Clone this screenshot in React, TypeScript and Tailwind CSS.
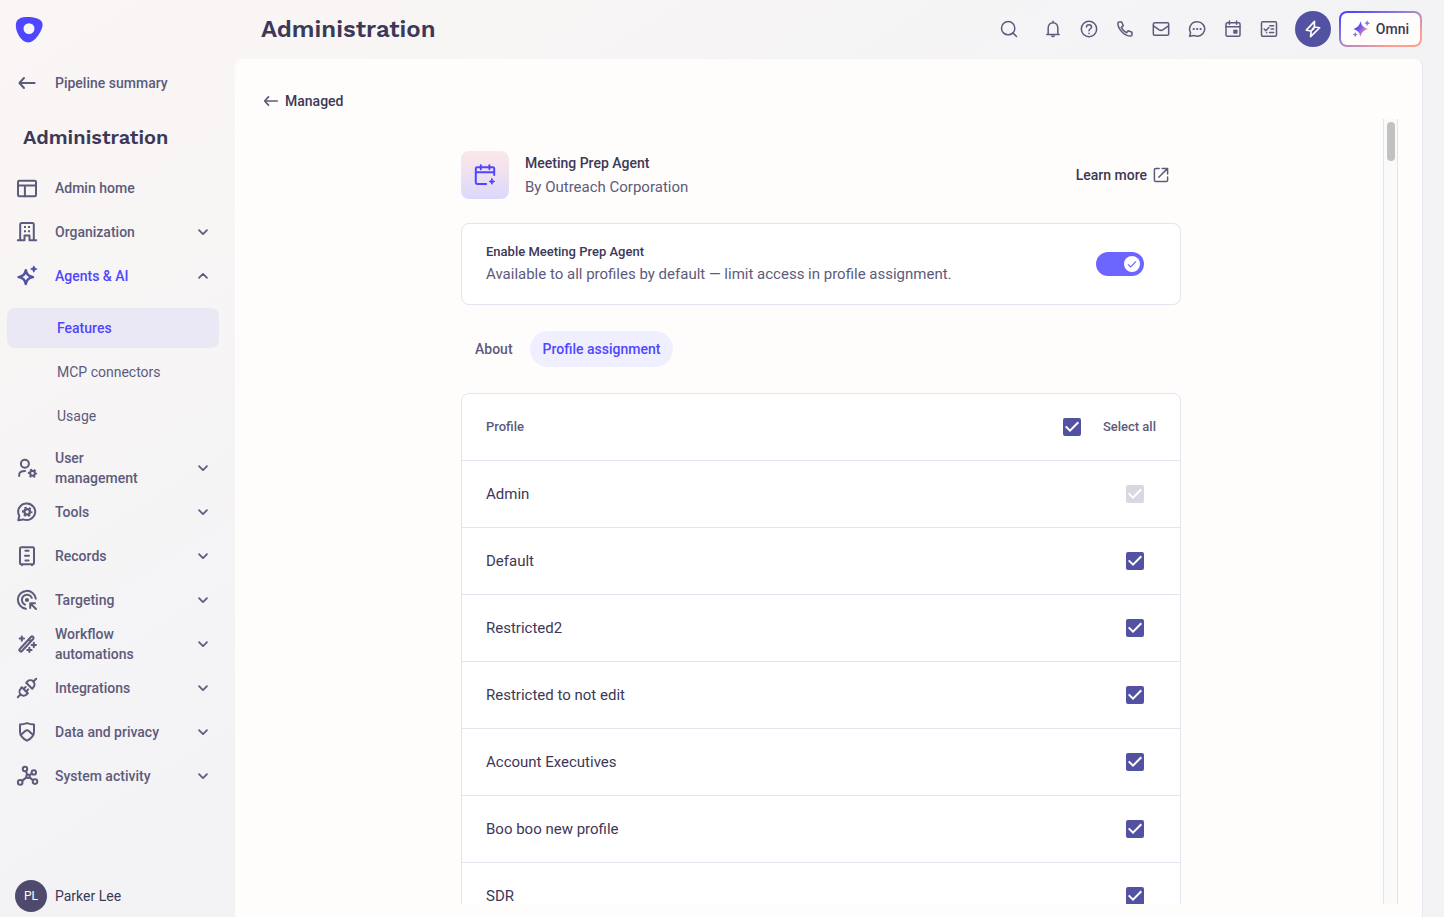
import React, { useState } from 'react';
import { Search } from 'lucide-react';

type IconName =
  | 'home' | 'building' | 'sparkle' | 'userGear' | 'tools' | 'records' | 'target' | 'wand' | 'plug' | 'shield' | 'nodes'
  | 'bell' | 'help' | 'phone' | 'mail' | 'chat' | 'calendar' | 'tasks' | 'bolt' | 'arrowLeft' | 'external' | 'calendarPlus'
  | 'chevronDown' | 'chevronUp';

interface GearProps {
  cx: number;
  cy: number;
  r: number;
}

// Ring with six teeth, the teeth are the dashes of a second circle
const Gear: React.FC<GearProps> = ({ cx, cy, r }) => {
  const tooth = (2 * Math.PI * r) / 12;
  return (
    <>
      <circle cx={cx} cy={cy} r={r * 0.64} strokeWidth={r * 0.54} />
      <circle cx={cx} cy={cy} r={r} strokeWidth={r * 0.46} strokeDasharray={`${tooth} ${tooth}`} strokeDashoffset={tooth / 2} strokeLinecap="butt" />
    </>
  );
};

const ICONS: Record<IconName, React.ReactNode> = {
  home: <><rect x="3" y="4.8" width="18" height="15.4" rx="1.2" /><path d="M3 9.6h18M9.9 9.6v10.6" /></>,
  building: (
    <>
      <path d="M2.8 20.2h6.7v-4.6h5v4.6h6.7M5.2 20V4.6c0-.9.6-1.5 1.5-1.5h10.6c.9 0 1.5.6 1.5 1.5V20" />
      <path d="M9 7h2M13 7h2M9 11.2h2M13 11.2h2" strokeLinecap="butt" />
    </>
  ),
  sparkle: (
    <>
      <path d="M10.8 6.2c.9 4.2 2.4 5.8 7.2 6.9-4.8 1.1-6.3 2.7-7.2 6.9-.9-4.2-2.4-5.8-7.2-6.9 4.8-1.1 6.3-2.7 7.2-6.9z" strokeWidth="2.5" />
      <path d="M18.8 2.2l.9 2 2 .8-2 .8-.9 2-.9-2-2-.8 2-.8z" fill="currentColor" strokeWidth="1.2" />
    </>
  ),
  userGear: (
    <>
      <circle cx="9.9" cy="7.7" r="4" />
      <path d="M4.2 20v-1.3c0-2.2 2-3.7 5.8-3.7" />
      <Gear cx={17.5} cy={17.3} r={3.8} />
    </>
  ),
  tools: (
    <>
      <path d="M12.2 3.6a8.7 8.2 0 1 1-3.9 15.8l-5 .8 1-4.4A8.4 8.2 0 0 1 12.2 3.6z" />
      <Gear cx={12.2} cy={11.8} r={4.3} />
    </>
  ),
  records: <><rect x="5" y="3.2" width="14" height="17" rx="1.2" /><path d="M10.4 6.8h3.2M10 11.7h4M10.4 16.6h3.2M7 20.8v.4M17 20.8v.4" /></>,
  target: (
    <>
      <path d="M20.8 10.6a9 9 0 1 0-10 10.2" />
      <path d="M16.8 9.8a5.2 5.2 0 1 0-6.8 6.9" />
      <circle cx="12" cy="12" r="1.1" fill="currentColor" />
      <path d="M15.2 20v-4.8H20M15.6 15.6l5.4 5.4" />
    </>
  ),
  wand: (
    <>
      <path d="M4.6 17.2L16.2 4.7c.5-.5 1.2-.5 1.700 0l.4.4c.4.5.4 1.1 0 1.600L6.700 19.200c-.4.4-1 .4-1.500 0l-.6-.6c-.4-.4-.4-1 0-1.400zM13.800 7.400l2 1.900" />
      <path d="M6.800 4.400v4.400M4.600 6.600H9M18.800 10.800v4.400M16.600 13H21M14.400 15.700v4.400M12.200 17.900h4.400" />
    </>
  ),
  plug: (
    <>
      <path d="M2.800 21.200l2.800-2.800M21.200 2.800l-2.800 2.800M6.800 11.200l6 6-1.300 1.300c-1.600 1.600-4.200 1.600-5.800 0s-1.600-4.200 0-5.800zM17.200 12.800l-6-6 1.300-1.300c1.600-1.600 4.200-1.600 5.800 0s1.600 4.200 0 5.800z" />
      <path d="M9 12.600l1.600-1.600M11.600 15l1.600-1.600" />
    </>
  ),
  shield: <><path d="M12 3.100c2.400.9 4.800 1.300 7 1.300v7.100c0 4.200-2.900 7.200-7 9.200-4.100-2-7-5-7-9.200V4.400c2.200 0 4.600-.4 7-1.300z" /><path d="M5.800 15l4.400-4c1.100-.9 2.500-.9 3.600 0l4.400 4" /></>,
  nodes: (
    <>
      <circle cx="10" cy="5" r="2.200" /><circle cx="18.800" cy="8.400" r="2.200" /><circle cx="13" cy="12.200" r="1.700" />
      <circle cx="5.200" cy="18.400" r="2.300" /><circle cx="20" cy="17.600" r="2.300" />
      <path d="M10.900 7.300l1.300 3M14.600 11.200l2.300-1.500M11.400 13.400l-4.300 3.500M14.500 13.400l3.600 2.800" />
    </>
  ),
  bell: <><path d="M4.600 18.600h14.800M6.200 18.400V11c0-3.700 2.200-6.600 5.800-6.600s5.800 2.900 5.800 6.600v7.400M12 2.600v1.600" /><path d="M10 20.600c.4 1.300 3.600 1.300 4 0z" fill="currentColor" strokeWidth="1" /></>,
  help: <><circle cx="12" cy="12" r="9.200" /><path d="M8.900 9.600c.1-1.700 1.400-2.800 3.100-2.800s3.100 1.100 3.100 2.700c0 2.200-3.100 2.300-3.100 4.700M12 17v.4" /></>,
  phone: <path d="M5 3.600h3.100l1.800 4.600-2.400 1.900a14 14 0 0 0 6.400 6.400l1.900-2.400 4.600 1.800V19a1.500 1.500 0 0 1-1.500 1.500C11.500 20.500 3.500 12.500 3.500 5.100c0-.9.7-1.500 1.500-1.500z" />,
  mail: <><rect x="2.800" y="4.600" width="18.400" height="15" rx="1.500" /><path d="M3 8.300l6.800 4.700c1.500.9 2.900.9 4.400 0L21 8.300" /></>,
  chat: <><path d="M12.200 3.400a9 8.600 0 1 1-4 16.300l-5 1 1.100-4.400A8.700 8.600 0 0 1 12.200 3.400z" /><path d="M8 12h.2M12.100 12h.2M16.200 12h.2" strokeWidth="2.600" /></>,
  calendar: <><rect x="3.600" y="4.600" width="16.800" height="16" rx="1.500" /><path d="M3.600 9.200h16.800M7.700 2.400v4M16.300 2.400v4" /><path d="M13 13.200h4v4h-4z" fill="currentColor" strokeWidth=".8" /></>,
  tasks: <><rect x="3" y="3.400" width="18" height="17.400" rx="1.500" /><path d="M6.200 12l2 2 3.600-3.800M13 8.200h4.600M14.600 12h3M12.600 16.200h5M9 16.600h.2" /></>,
  bolt: <path d="M13.800 2.800L4 13.300l5.800.9-.7 7L20 10.500l-6.400-.9zM9.800 14.200l3.200-2.600M13.600 9.600l-2.600 2.800" />,
  arrowLeft: <path d="M19.600 12H4.600M9 7l-4.600 5L9 17" />,
  external: <path d="M9.500 3.200H5A1.800 1.800 0 0 0 3.200 5v14A1.800 1.800 0 0 0 5 20.800h14a1.800 1.800 0 0 0 1.800-1.800v-4.500M13.500 3.200h7.300v7.300M20.500 3.500L9 15" />,
  calendarPlus: (
    <>
      <path d="M21.200 12V5.600a1.400 1.400 0 0 0-1.400-1.400H4.200a1.400 1.400 0 0 0-1.400 1.400v14a1.400 1.400 0 0 0 1.400 1.400h9M2.800 9.200h18.400M7.800 2.200v4M16.400 2.200v4" />
      <path d="M18.900 15.700l.8 2 2 .8-2 .8-.8 2-.8-2-2-.8 2-.8z" fill="currentColor" strokeWidth="1" />
    </>
  ),
  chevronDown: <path d="M6 9.200l6 6 6-6" />,
  chevronUp: <path d="M6 14.800l6-6 6 6" />,
};

interface IconProps {
  name: IconName;
  className?: string;
  weight?: number;
}

const Icon: React.FC<IconProps> = ({ name, className = 'size-6', weight = 1.8 }) => (
  <svg
    viewBox="0 0 24 24"
    className={`shrink-0 ${className}`}
    fill="none"
    stroke="currentColor"
    strokeWidth={weight}
    strokeLinecap="round"
    strokeLinejoin="round"
    aria-hidden="true"
  >
    {ICONS[name]}
  </svg>
);

interface NavItem {
  label: string;
  icon: IconName;
  expandable?: boolean;
  children?: string[];
}

const navItems: NavItem[] = [
  { label: 'Admin home', icon: 'home' },
  { label: 'Organization', icon: 'building', expandable: true },
  { label: 'Agents & AI', icon: 'sparkle', expandable: true, children: ['Features', 'MCP connectors', 'Usage'] },
  { label: 'User management', icon: 'userGear', expandable: true },
  { label: 'Tools', icon: 'tools', expandable: true },
  { label: 'Records', icon: 'records', expandable: true },
  { label: 'Targeting', icon: 'target', expandable: true },
  { label: 'Workflow automations', icon: 'wand', expandable: true },
  { label: 'Integrations', icon: 'plug', expandable: true },
  { label: 'Data and privacy', icon: 'shield', expandable: true },
  { label: 'System activity', icon: 'nodes', expandable: true },
];

const headerIcons: { name: IconName; label: string }[] = [
  { name: 'bell', label: 'Notifications' },
  { name: 'help', label: 'Help' },
  { name: 'phone', label: 'Calls' },
  { name: 'mail', label: 'Mail' },
  { name: 'chat', label: 'Messages' },
  { name: 'calendar', label: 'Calendar' },
  { name: 'tasks', label: 'Tasks' },
];

const profiles = ['Admin', 'Default', 'Restricted2', 'Restricted to not edit', 'Account Executives', 'Boo boo new profile', 'SDR'];

const Sidebar: React.FC = () => {
  const [open, setOpen] = useState('Agents & AI');

  return (
    <aside className="flex w-[235px] shrink-0 flex-col overflow-hidden">
      <a href="#" aria-label="Outreach" className="mt-4 ml-[15px] block size-7">
        <svg viewBox="0 0 28 28" className="size-7" aria-hidden="true">
          <path
            fillRule="evenodd"
            fill="#4f46ff"
            d="M13 1C6 1 .8 2.5.8 9.5.8 16 6 26.5 13.5 26.5 20 26.5 27.6 14.5 27.6 8.5 27.6 3 20 1 13 1zM14 7.2a5.5 5.4 0 1 1 0 10.8 5.5 5.4 0 0 1 0-10.8z"
          />
        </svg>
      </a>
      <a href="#" className="mt-[17px] flex h-11 items-center gap-4 pl-[15px] text-sm font-medium text-[#5d5b7b]">
        <Icon name="arrowLeft" className="size-6" weight={2} />
        Pipeline summary
      </a>
      <h2 className="mt-4 pl-[23px] font-['Work_Sans','Noto_Sans',sans-serif] text-xl leading-8 font-semibold text-[#3c3858]">Administration</h2>
      <nav className="mt-[13px] flex flex-col">
        {navItems.map((item) => {
          const isOpen = open === item.label && !!item.children;
          return (
            <React.Fragment key={item.label}>
              <button
                type="button"
                className={`flex h-11 items-center pr-5 pl-[15px] text-left text-sm font-medium ${isOpen ? 'text-[#4f46ff]' : 'text-[#5d5b7b]'}`}
                aria-expanded={item.expandable ? isOpen : undefined}
                onClick={() => setOpen(isOpen ? '' : item.label)}
              >
                <Icon name={item.icon} weight={2} className={isOpen ? 'size-6 text-[#5352a2]' : 'size-6'} />
                <span className="ml-4 w-28 leading-5">{item.label}</span>
                {item.expandable && (
                  <Icon name={isOpen ? 'chevronUp' : 'chevronDown'} weight={2.6} className="mr-1 ml-auto size-4 text-[#5d5b7b]" />
                )}
              </button>
              {isOpen && (
                <div className="flex flex-col gap-1 py-[10px] pr-4 pl-[7px]">
                  {item.children?.map((child, i) => (
                    <a
                      key={child}
                      href="#"
                      className={`flex h-10 items-center rounded-lg pl-[50px] text-sm ${i === 0 ? 'bg-[#ebe8f6] font-medium text-[#4f46ff]' : 'text-[#5d5b7b]'}`}
                    >
                      {child}
                    </a>
                  ))}
                </div>
              )}
            </React.Fragment>
          );
        })}
      </nav>
      <div className="mt-auto mb-[5px] ml-[15px] flex items-center gap-2">
        <span className="flex size-8 items-center justify-center rounded-full bg-[#4d4a6d] text-xs text-white">PL</span>
        <span className="text-sm text-[#3c3858]">Parker Lee</span>
      </div>
    </aside>
  );
};

const Header: React.FC = () => (
  <header className="flex h-[59px] shrink-0 items-center pr-[22px] pb-px pl-[26px]">
    <h1 className="mr-auto font-['Work_Sans','Noto_Sans',sans-serif] text-2xl font-semibold text-[#3c3858]">Administration</h1>
    <div className="flex items-center text-[#5d5b7b]">
      <button type="button" aria-label="Search" className="mr-2 flex size-9 items-center justify-center">
        <Search size={20} strokeWidth={1.8} />
      </button>
      {headerIcons.map((item) => (
        <button key={item.name} type="button" aria-label={item.label} className="flex size-9 items-center justify-center">
          <Icon name={item.name} className="size-5" />
        </button>
      ))}
    </div>
    <button type="button" aria-label="Quick actions" className="ml-2 flex size-9 items-center justify-center rounded-full bg-[#5352a2] text-white">
      <Icon name="bolt" className="size-5" weight={2} />
    </button>
    <button type="button" className="ml-2 h-9 rounded-lg bg-linear-to-br from-[#4f46ff] from-10% to-[#ff9f8c] to-80% p-[2px]">
      <span className="flex h-full items-center gap-1.5 rounded-md bg-[#fffdfb] px-[11px] text-sm font-medium text-[#3c3858]">
        <svg viewBox="0 0 18 18" className="size-[18px]" aria-hidden="true">
          <defs>
            <linearGradient id="omni" x1="0" y1="0.2" x2="1" y2="0.8">
              <stop offset=".3" stopColor="#4f46ff" />
              <stop offset=".9" stopColor="#ff9f8c" />
            </linearGradient>
          </defs>
          <path fill="url(#omni)" d="M8.500 1.200c1.100 4.600 2.800 6.200 7.800 7.800-5 1.600-6.700 3.200-7.800 7.800-1.100-4.600-2.800-6.200-7.200-7.800 4.400-1.600 6.100-3.200 7.200-7.800z" />
          <path fill="#9270dc" d="M15.200.2l.9 2 2 .9-2 .9-.9 2-.9-2-2-.9 2-.9zM3.200 12l.8 1.800 1.800.8-1.800.8-.8 1.800-.8-1.800-1.800-.8 1.800-.8z" />
        </svg>
        Omni
      </span>
    </button>
  </header>
);

interface CheckboxProps {
  id: string;
  label?: string;
  checked: boolean;
  disabled?: boolean;
  onChange: () => void;
}

const Checkbox: React.FC<CheckboxProps> = ({ id, label, checked, disabled, onChange }) => (
  <span className="relative block size-[18px]">
    <input
      id={id}
      type="checkbox"
      aria-label={label}
      checked={checked}
      disabled={disabled}
      onChange={onChange}
      className="block size-[18px] appearance-none rounded-xs border-2 border-[#5352a2] checked:bg-[#5352a2] disabled:border-[#d9d8e2] disabled:bg-[#d9d8e2]"
    />
    {checked && (
      <svg viewBox="0 0 18 18" className="pointer-events-none absolute inset-0 size-[18px]" fill="none" stroke="white" strokeWidth="2" aria-hidden="true">
        <path d="M2.700 8.400L7 12.600l8.300-8.300" />
      </svg>
    )}
  </span>
);

const ProfileTable: React.FC = () => {
  const [selected, setSelected] = useState<string[]>(profiles);
  const allSelected = selected.length === profiles.length;

  const toggle = (profile: string) => {
    setSelected((prev) => (prev.includes(profile) ? prev.filter((p) => p !== profile) : [...prev, profile]));
  };

  return (
    <div className="overflow-hidden rounded-lg border border-[#e2e4ee] bg-white">
      <table className="w-full border-separate border-spacing-0 text-left">
        <thead>
          <tr className="h-[67px] text-[13px] text-[#5d5b7b]">
            <th className="border-b border-[#e2e4ee] pl-6 font-medium">Profile</th>
            <th className="border-b border-[#e2e4ee] pr-6 font-medium">
              <div className="flex items-center justify-end gap-[22px]">
                <Checkbox id="select-all" checked={allSelected} onChange={() => setSelected(allSelected ? ['Admin'] : profiles)} />
                <label htmlFor="select-all">Select all</label>
              </div>
            </th>
          </tr>
        </thead>
        <tbody>
          {profiles.map((profile) => (
            <tr key={profile} className="h-[67px] text-[15px] text-[#3c3858]">
              <td className="border-b border-[#e2e4ee] pl-6">{profile}</td>
              <td className="border-b border-[#e2e4ee] pr-9">
                <div className="flex justify-end">
                  <Checkbox
                    id={`profile-${profile}`}
                    label={profile}
                    checked={selected.includes(profile)}
                    disabled={profile === 'Admin'}
                    onChange={() => toggle(profile)}
                  />
                </div>
              </td>
            </tr>
          ))}
        </tbody>
      </table>
    </div>
  );
};

const App: React.FC = () => {
  const [enabled, setEnabled] = useState(true);
  const [tab, setTab] = useState('Profile assignment');

  return (
    <div className="flex h-screen overflow-hidden bg-linear-to-br from-[#faf6f4] to-[#f3f3f6] to-50% font-[Roboto,sans-serif]">
      <Sidebar />
      <div className="flex min-w-0 flex-1 flex-col">
        <Header />
        <main className="mr-[21px] flex min-h-0 flex-1 flex-col rounded-t-lg border-r border-[#e6e6ec] bg-[#fffdfb] pt-6 pr-6 pb-[13px] pl-6">
          <a href="#" className="flex h-9 shrink-0 items-center gap-1 self-start pl-0.5 text-sm font-medium text-[#3c3858]">
            <Icon name="arrowLeft" className="size-5 text-[#5d5b7b]" weight={2} />
            Managed
          </a>
          <div className="flex min-h-0 flex-1">
            <div className="min-w-0 flex-1 overflow-hidden">
              <div className="mx-auto max-w-[720px] pt-8">
                <div className="flex items-center gap-4">
                  <div className="flex size-12 items-center justify-center rounded-lg bg-linear-to-b from-[#fde8e6] to-[#dcd8fc] text-[#4f46ff]">
                    <Icon name="calendarPlus" weight={2} />
                  </div>
                  <div>
                    <h3 className="text-sm leading-6 font-medium text-[#3c3858]">Meeting Prep Agent</h3>
                    <p className="text-[15px] leading-6 text-[#5d5b7b]">By Outreach Corporation</p>
                  </div>
                  <a href="#" className="mr-[10px] ml-auto flex items-center gap-1 text-sm font-medium text-[#3c3858]">
                    Learn more
                    <Icon name="external" className="size-5 p-px text-[#5d5b7b]" weight={2} />
                  </a>
                </div>

                <div className="mt-6 flex items-center justify-between rounded-lg border border-[#e2e4ee] bg-white py-[18px] pr-9 pl-6">
                  <div>
                    <h4 className="text-[13px] leading-5 font-medium text-[#3c3858]">Enable Meeting Prep Agent</h4>
                    <p className="text-[15px] leading-6 text-[#5d5b7b]">Available to all profiles by default — limit access in profile assignment.</p>
                  </div>
                  <button
                    type="button"
                    role="switch"
                    aria-checked={enabled}
                    aria-label="Enable Meeting Prep Agent"
                    onClick={() => setEnabled(!enabled)}
                    className={`flex h-6 w-12 items-center rounded-full px-1 ${enabled ? 'justify-end bg-[#6c66ff]' : 'justify-start bg-[#d9d8e2]'}`}
                  >
                    <span className="flex size-4 items-center justify-center rounded-full bg-white text-[#6c66ff]">
                      {enabled && (
                        <svg viewBox="0 0 16 16" className="size-4" fill="none" stroke="currentColor" strokeWidth="1.2" aria-hidden="true">
                          <path d="M4 8.400l2.700 2.600L12 5.400" />
                        </svg>
                      )}
                    </span>
                  </button>
                </div>

                <div role="tablist" className="my-[26px] flex gap-1 pl-px">
                  {['About', 'Profile assignment'].map((name) => (
                    <button
                      key={name}
                      type="button"
                      role="tab"
                      aria-selected={tab === name}
                      onClick={() => setTab(name)}
                      className={`h-9 rounded-full px-[13px] text-sm font-medium ${tab === name ? 'bg-[#f0efff] text-[#4f46ff]' : 'text-[#5d5b7b]'}`}
                    >
                      {name}
                    </button>
                  ))}
                </div>

                <ProfileTable />
              </div>
            </div>
            <div className="w-[15px] shrink-0 border-x border-[#e4e4e6] bg-[#fafafa] px-[3px] pt-[3px]">
              <div className="h-[39px] w-2 rounded-full bg-[#c1c1c1]" />
            </div>
          </div>
        </main>
      </div>
    </div>
  );
};

export default App;
